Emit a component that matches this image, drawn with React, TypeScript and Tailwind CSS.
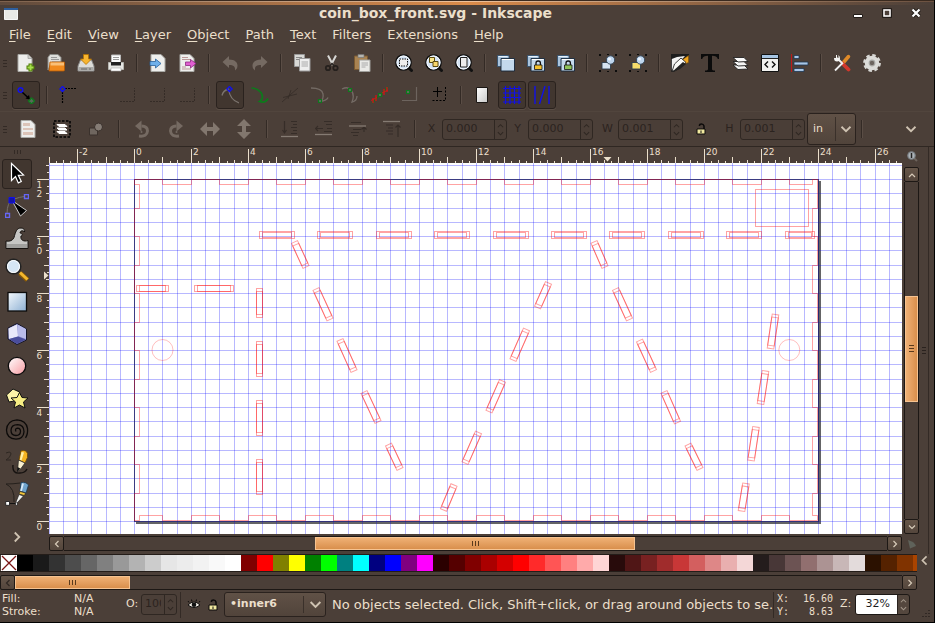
import React, { useEffect, useState } from "react";

type Kids = { children?: React.ReactNode };

/* ---------- small building blocks ---------- */

const Ico = ({ children, s = 18 }: Kids & { s?: number }) => (
  <svg width={s} height={s} viewBox={`0 0 ${s} ${s}`} fill="none" aria-hidden="true" className="block shrink-0">
    {children}
  </svg>
);

const Sep = () => <span className="mr-[6px] ml-[5px] h-[18px] w-px shrink-0 bg-[#332a25] shadow-[1px_0_0_#5a4d45]" />;

const Handle = () => (
  <span className="mr-[4px] ml-[3px] flex w-[4px] shrink-0 flex-col gap-[2px]">
    <i className="h-px bg-[#332a25]" />
    <i className="h-px bg-[#332a25]" />
    <i className="h-px bg-[#332a25]" />
  </span>
);

const Tb = ({ label, on, wide, children }: Kids & { label: string; on?: boolean; wide?: boolean }) => (
  <button type="button" aria-label={label} title={label} className={`flex h-[28px] shrink-0 items-center justify-center ${wide ? "w-[34px]" : "w-[30px]"}`}>
    <span
      className={`flex h-[28px] w-[28px] items-center justify-center rounded-[3px] ${on ? "border border-[#2a221e] bg-[#41362f] shadow-[0_1px_0_#5a4d45]" : ""}`}
    >
      {children}
    </span>
  </button>
);

const Chevron = ({ dir, color = "#cfc3b2", size = 8 }: { dir: "up" | "down" | "left" | "right"; color?: string; size?: number }) => {
  const d = { up: "M1 6L4 3L7 6", down: "M1 2.5L4 5.500L7 2.5", left: "M5.500 1L2.500 4L5.500 7", right: "M2.500 1L5.500 4L2.500 7" }[dir];
  return (
    <svg width={size} height={size} viewBox="0 0 8 8" fill="none" aria-hidden="true" className="block shrink-0">
      <path d={d} stroke={color} strokeWidth="1.200" />
    </svg>
  );
};

/* ---------- command bar icons ---------- */

const Page = ({ x = 1, w = 14 }: { x?: number; w?: number }) => (
  <path d={`M${x} .5h${w - 4}l4 4v13h-${w}z`} fill="#eeeeec" stroke="#a9a9a5" />
);

const INew = () => (
  <Ico>
    <Page />
    <path d="M11 .5v4h4" fill="#cfcfcb" stroke="#999" strokeWidth=".7" />
    <path d="M13.500 9.500v8M9.500 13.500h8" stroke="#4e7a06" strokeWidth="4" />
    <path d="M13.500 10.500v6M10.500 13.500h6" stroke="#a6dd4c" strokeWidth="2" />
  </Ico>
);
const IOpen = () => (
  <Ico>
    <path d="M1 16V3.500L3 .5h8l3 3V8H5z" fill="#dededb" stroke="#8c8c88" />
    <path d="M4 3.500h6M4 5.500h8" stroke="#999" />
    <path d="M3 8h14.500v8q0 1-1 1H2z" fill="#f08a1d" stroke="#b95a04" strokeWidth=".8" />
    <path d="M3.500 8.500h13.500v3H3.500z" fill="#f9c078" />
  </Ico>
);
const ISave = () => (
  <Ico>
    <path d="M3.500 6h11l2.500 6v5H1v-5z" fill="#dcdcd8" stroke="#888" />
    <path d="M2 13h14v3.500H2z" fill="#a9a9a6" />
    <path d="M4 15h6M12 15h2" stroke="#666" />
    <path d="M6.500.5h5v4.500h3L9 10.500 3.500 5h3z" fill="#f7b530" stroke="#b57200" strokeWidth=".8" />
  </Ico>
);
const IPrint = () => (
  <Ico>
    <path d="M4.500 1h9v8h-9z" fill="#fbfbfb" stroke="#bbb" />
    <path d="M6 3.500h6M6 5.500h6" stroke="#999" />
    <path d="M1.500 8.500h15v7h-15z" fill="#e6e6e3" stroke="#b5b5b0" />
    <path d="M4 8h10v3.500H4z" fill="#222" />
    <path d="M4 14h10v3H4z" fill="#fff" stroke="#aaa" strokeWidth=".6" />
  </Ico>
);
const IImport = () => (
  <Ico>
    <Page x={2} />
    <path d="M1 7.500h5.500V5l5.500 4.500-5.500 4.500v-2.500H1z" fill="#6fb0ea" stroke="#2a6199" strokeWidth=".8" />
  </Ico>
);
const IExport = () => (
  <Ico>
    <Page x={1} />
    <path d="M3 3.500h6M3 5.500h9M3 13h4M3 15h9" stroke="#b99" />
    <path d="M6.500 8h5V5.500L17 9.500l-5.500 4.500v-2.500h-5z" fill="#e05fd0" stroke="#8c2a80" strokeWidth=".8" />
  </Ico>
);
const IUndo = ({ flip }: { flip?: boolean }) => (
  <Ico>
    <g transform={flip ? "matrix(-1 0 0 1 18 0)" : undefined}>
      <path d="M1.500 8L8 2v3.500c6 0 8.500 3 8.500 6 0 2.500-1 3.800-2.500 5 .5-4-1.500-5.500-6-5.500V14z" fill="#756a62" />
    </g>
  </Ico>
);
const ICopy = () => (
  <Ico>
    <path d="M1.500.5h10v12h-10z" fill="#d8d8d5" stroke="#999" />
    <path d="M3 3.500h6M3 5.500h6" stroke="#888" />
    <path d="M6.500 4.500h10.500v12.500H6.500z" fill="#eee" stroke="#999" />
    <path d="M8.500 8h6.500M8.500 10h6.500M8.500 12h6.500" stroke="#aaa" />
  </Ico>
);
const ICut = () => (
  <Ico>
    <path d="M5 1.500L10 11M13 1.500L8 11" stroke="#d7d7d4" strokeWidth="2" />
    <circle cx="5" cy="14" r="2.200" stroke="#25201d" strokeWidth="1.800" />
    <circle cx="12.500" cy="14" r="2.200" stroke="#25201d" strokeWidth="1.800" />
    <path d="M7 11.500l2-2 2 2" stroke="#25201d" strokeWidth="1.500" />
  </Ico>
);
const IPaste = () => (
  <Ico>
    <path d="M1.500 2h13v13.500h-13z" fill="#a98352" stroke="#7c5a30" />
    <path d="M5 .5h6v3H5z" fill="#b5b5b0" stroke="#777" strokeWidth=".7" />
    <path d="M6.500 6H17v11.500H6.500z" fill="#e9e9e6" stroke="#a0a09c" />
    <path d="M8.500 9h6.500M8.500 11h6.500M8.500 13h4" stroke="#aaa" />
  </Ico>
);
const IZoom = ({ children }: Kids) => (
  <Ico>
    <path d="M13.500 13.500l3 3" stroke="#111" strokeWidth="3" strokeLinecap="round" />
    <circle cx="8.500" cy="8.500" r="7.700" fill="#d3e2f3" stroke="#0d0d0d" strokeWidth="1.300" />
    <circle cx="8.500" cy="8.500" r="6.500" stroke="#f7fbff" />
    {children}
  </Ico>
);
const IDup = ({ children }: Kids) => (
  <Ico>
    <path d="M.5 1.500H12V5H5v7.500H.5z" fill="#a9c4de" stroke="#2c4c6c" strokeWidth=".8" />
    <path d="M1.500 2.500h9" stroke="#e8f2fb" />
    <path d="M4 4.500h13.500V17H4z" fill="#c4d9ec" stroke="#15273a" strokeWidth=".9" />
    <path d="M5 5.500h11.500" stroke="#fff" />
    {children}
  </Ico>
);
const Lock = ({ c }: { c: string }) => (
  <>
    <path d="M9 11V9q0-2 2.200-2t2.200 2v2" stroke="#111" strokeWidth="1.300" />
    <path d="M7.500 11h7.500v4.500H7.500z" fill={c} stroke="#111" strokeWidth=".8" />
  </>
);
const Dots4 = () => <path d="M0 0h2v2H0zM16 0h2v2h-2zM0 16h2v2H0zM16 16h2v2h-2zM8 0h2v1H8zM8 17h2v1H8z" fill="#0c0c0c" />;
const IGroup = ({ yellow }: { yellow?: boolean }) => (
  <Ico>
    <Dots4 />
    <path d="M3 8.500h8.500v6.500H3z" fill={yellow ? "#f5dc6b" : "#d5e3f2"} stroke="#2b3c4c" strokeWidth=".9" />
    <circle cx="11.500" cy="6" r="4.200" fill="#bfd6ee" stroke="#2b3c4c" strokeWidth=".9" />
    <circle cx="10.500" cy="5" r="1.600" fill="#eef6ff" />
  </Ico>
);
const IFill = () => (
  <Ico>
    <path d="M0 0h18v2L4 17.500H0z" fill="#1c1c1c" />
    <path d="M.8 16.500V5L6 3l8-1z" fill="#f2f2f2" />
    <path d="M17.500 1.500v7L13 10l-2-4z" fill="#f0a51f" stroke="#7a4d05" strokeWidth=".6" />
    <path d="M10 4l5 4.500L8 15 1 17.500 3.500 10z" fill="#fafaf8" stroke="#111" strokeWidth=".8" />
    <path d="M1.500 17.500L12 8l3 2-6 5z" fill="#222" />
  </Ico>
);
const IText = () => (
  <Ico>
    <path d="M0 0h18v5h-1.200Q16 1.800 11 1.800V15q0 1.500 3 1.500V18H4v-1.500q3 0 3-1.500V1.800Q2 1.800 1.200 5H0z" fill="#0b0b0b" />
  </Ico>
);
const ILayers = () => (
  <Ico>
    <path d="M2 11l5 4.500 10-.5-4-4z" fill="#f5f5f5" stroke="#222" strokeWidth=".9" />
    <path d="M2 7.500L7 12l10-.5-4-4z" fill="#f5f5f5" stroke="#222" strokeWidth=".9" />
    <path d="M2 3.500L7 8l10-.5-4-4z" fill="#fbfbfb" stroke="#222" strokeWidth=".9" />
  </Ico>
);
const IXml = () => (
  <Ico>
    <path d="M.5.5h17v17H.5z" fill="#f2f2f0" stroke="#111" />
    <path d="M1 1h16v3H1z" fill="#a6c4e2" />
    <path d="M1 4.500h16" stroke="#222" />
    <path d="M7 7.500L4 10.500l3 3M11 7.500l3 3-3 3" stroke="#111" strokeWidth="1.400" />
  </Ico>
);
const IAlign = () => (
  <Ico>
    <path d="M.5 0v18" stroke="#c01818" />
    <path d="M3 1.500h5v3H3zM3 8h14v3H3zM3 14.500h10v3H3z" fill="#a8c6e6" stroke="#1d3650" strokeWidth=".8" />
  </Ico>
);
const IPrefs = () => (
  <Ico>
    <path d="M15.500 2.500L10 9" stroke="#e08a28" strokeWidth="3.500" strokeLinecap="round" />
    <path d="M9.500 9.500l6 6" stroke="#d3382c" strokeWidth="3.800" strokeLinecap="round" />
    <path d="M9.500 9L2 16.500M4 4l6 6" stroke="#eee" strokeWidth="1.800" />
    <path d="M1 4q0 3.500 3 3.500T7 4.500Q7 2 5.500 1v3H4V1H3v3z" fill="#f4f4f2" />
  </Ico>
);
const IGear = () => (
  <Ico>
    <circle cx="9" cy="9" r="7.800" stroke="#d9d9d6" strokeWidth="2.200" strokeDasharray="3.500 2.630" />
    <circle cx="9" cy="9" r="5" stroke="#dcdcd9" strokeWidth="4.500" />
    <circle cx="9" cy="9" r="2.800" fill="#6c655f" stroke="#a8a8a5" strokeWidth="1.200" />
  </Ico>
);

/* ---------- snap bar icons ---------- */

const faint = "#352c27";
const Node = ({ x, y, c = "#1010f0" }: { x: number; y: number; c?: string }) => (
  <path d={`M${x} ${y - 2.5}l2.500 2.500l-2.500 2.500l-2.500 -2.500z`} stroke={c} strokeWidth="1.400" />
);
const Sq = ({ x, y }: { x: number; y: number }) => <rect x={x - 1.5} y={y - 1.5} width="3" height="3" fill="#5a6a5a" stroke="#0d7a1c" />;

const ISnap = () => (
  <Ico>
    <path d="M5 6l6.500 6" stroke="#000" strokeWidth="1.500" />
    <path d="M13 13.500l-4.500-1L12 9z" fill="#000" />
    <circle cx="3.500" cy="4" r="2.300" stroke="#1010f0" strokeWidth="1.500" />
    <path d="M14.500 12l3 3-3 3-3-3z" fill="#5a6a5a" stroke="#0d7a1c" strokeWidth="1.300" />
  </Ico>
);
const ISnapBox = () => (
  <Ico>
    <path d="M3.500 6v12M6 2.500h12" stroke="#000" strokeWidth="1.200" strokeDasharray="2 1" />
    <Node x={3.5} y={3} />
  </Ico>
);
const IFaintBox = () => (
  <Ico>
    <path d="M1 15.500h14.500V2" stroke={faint} strokeDasharray="2 1" />
  </Ico>
);
const ISnapPath = () => (
  <Ico>
    <path d="M1 9.500q1-5 6.500-6.500 1.500 11 10.500 14" stroke="#7b736d" strokeWidth="1.300" />
    <Node x={8.5} y={3} />
  </Ico>
);
const ISnapGreen = () => (
  <Ico>
    <path d="M.5 2Q6 2 10 6.500q3.500 6-1.500 9 6 2 8.500-3" stroke="#0d7a1c" strokeWidth="1.700" />
  </Ico>
);
const IFaintX = () => (
  <Ico>
    <path d="M1 16L17 2M2 11.500L16 8M7 13l3-9" stroke={faint} strokeWidth=".8" />
  </Ico>
);
const ISmooth = () => (
  <Ico>
    <path d="M0 2q11 0 12 6 1 5-3 7.500 7-1 8-4" stroke="#746b65" strokeWidth="1.300" />
    <Sq x={9} y={15} />
  </Ico>
);
const ICusp = () => (
  <Ico>
    <path d="M1 3q6-3 9 1 4 5 1 12 5-1 5-6" stroke="#746b65" strokeWidth="1.300" />
    <Sq x={9} y={4} />
  </Ico>
);
const IMid = () => (
  <Ico>
    <path d="M1 17L17 1" stroke="#15711c" strokeWidth="1.200" />
    <path d="M2 12v5M5 9v6M13 3v6M16 1v5" stroke="#d01616" strokeWidth="1.300" />
    <path d="M0 14.500l6-3M11 7l6-3" stroke="#d01616" />
    <Sq x={9} y={9} />
  </Ico>
);
const ICenter = () => (
  <Ico>
    <path d="M1 14.500h14.500V1" stroke="#6d645e" strokeWidth="1.200" />
    <Sq x={7} y={6} />
  </Ico>
);
const IRot = () => (
  <Ico>
    <path d="M6.500 1v10M2 5.500h9" stroke="#000" />
    <path d="M1.500 14.500h13V0" stroke="#000" strokeDasharray="2 1.500" />
  </Ico>
);
const IPageBorder = () => (
  <Ico>
    <defs>
      <linearGradient id="pg" x1="0" y1="0" x2="1" y2="1">
        <stop stopColor="#fff" />
        <stop offset="1" stopColor="#c9c9c9" />
      </linearGradient>
    </defs>
    <path d="M3.500 1.500h11v15h-11z" fill="url(#pg)" stroke="#1b1714" />
  </Ico>
);
const IGrid = () => (
  <Ico>
    <path d="M2.500 0v18M7 0v18M11.500 0v18M16 0v18M0 2.500h18M0 7h18M0 11.500h18M0 16h18" stroke="#1010e8" strokeWidth="1.200" />
  </Ico>
);
const IGuides = () => (
  <Ico>
    <path d="M2 0v18M16 0v18M6.500 18L12 0" stroke="#1010e8" strokeWidth="1.400" />
  </Ico>
);

/* ---------- tool control icons ---------- */

const ISelAll = () => (
  <Ico>
    <Page x={2} />
    <path d="M4 3h7v3H4zM4 8h10v2H4zM4 12h10v3H4z" fill="#dcc4b8" />
  </Ico>
);
const ISelLayers = () => (
  <Ico>
    <path d="M1 1h16v16H1z" stroke="#000" strokeWidth="1.500" strokeDasharray="2.500 1.500" />
    <path d="M4 4.500h8l2 2H6zM4 8h8l2 2H6zM4 11.500h8l2 2H6z" fill="#fff" stroke="#fff" />
  </Ico>
);
const IDesel = () => (
  <Ico>
    <path d="M2.500 8h8v7h-8z" fill="#6f665f" stroke="#3a312c" />
    <circle cx="11.500" cy="7" r="4" fill="#857c75" stroke="#3a312c" />
  </Ico>
);
const IRotate = ({ flip }: { flip?: boolean }) => (
  <Ico>
    <g transform={flip ? "matrix(-1 0 0 1 18 0)" : undefined}>
      <path d="M6 16q8 1 8.500-5 0-5-6-5" stroke="#756a62" strokeWidth="3" />
      <path d="M2 6L8.500.5v11z" fill="#756a62" />
      <circle cx="8.500" cy="12" r="1" fill="#756a62" />
    </g>
  </Ico>
);
const IFlip = ({ v }: { v?: boolean }) => (
  <svg width="20" height="20" viewBox="0 0 20 20" aria-hidden="true" className="block shrink-0">
    <path transform={v ? "rotate(90 10 10)" : undefined} d="M0 10L7 3v5h6V3l7 7-7 7v-5H7v5z" fill="#82776e" />
  </svg>
);
const IRaise = ({ n }: { n: number }) => (
  <Ico>
    <g stroke="#362d28" strokeWidth="1.200">
      {n === 0 && <path d="M3.500 1v12M1.500 10l2 3 2-3M10 1.500h6M12 4.500h4M10 7.500h6M12 10.500h4M10 13.500h6" />}
      {n === 1 && <path d="M8 8.500H0M3 6L.5 8.500 3 11M9 1.500h8M11 4.500h6M12 8.500h5M9 11.500h8" />}
      {n === 2 && <path d="M2 2.500h10M4 9.500h8M2 12.500h8M4 15.500h5M15 12V7M12.500 9.500L15 7l2.500 2.500" />}
      {n === 3 && <path d="M3 5h7M5 8h5M3 11h7M5 14h5M15 17V5M12.500 7.500L15 5l2.500 2.500" />}
    </g>
    <path d={["M0 16.500h17", "M0 14.500h17", "M0 6h17", "M0 1.500h17"][n]} stroke="#857b73" strokeWidth="1.300" />
  </Ico>
);
const OpenLock = () => (
  <svg width="10" height="12" viewBox="0 0 10 12" fill="none" aria-hidden="true" className="block shrink-0">
    <path d="M3.500 3V2.500Q3.500 1 5.500 1T8 3v4" stroke="#0d0b0a" strokeWidth="1.500" />
    <path d="M1 6h8v5H1z" fill="#f2e9a0" stroke="#0d0b0a" />
    <path d="M4.500 7.500h1V10h-1z" fill="#111" />
  </svg>
);

/* ---------- toolbox ---------- */

const tools: { name: string; icon: React.ReactNode }[] = [
  {
    name: "Select and transform",
    icon: <path d="M6.500 1.500l12 11.500-5.200.3 3 6.200-3 1.400-2.800-6.400-4 4z" fill="#000" stroke="#fff" strokeWidth="1.200" />,
  },
  {
    name: "Edit paths by nodes",
    icon: (
      <>
        <path d="M2 20Q2 8 8 5.500 14 3 22 2" stroke="#77706a" />
        <path d="M7 6.500l14.500 10-6 5.500z" fill="#000" stroke="#ddd" strokeWidth=".9" />
        <path d="M4 3.500h5.500V9H4z" fill="#1414a8" stroke="#1010f0" />
        <path d="M19.500.5h4v4h-4zM.5 19.500h4v4h-4z" fill="#4b3f38" stroke="#6666f5" strokeWidth="1.400" />
      </>
    ),
  },
  {
    name: "Tweak objects",
    icon: (
      <>
        <path d="M1 22.500V15q6 1 8-3.500C10.500 6 11.500 2 16 2c3 0 4 2 3.500 4-1-1.500-4-2-4.500 1 3 0 2.500 3 1 3-1 4 3 6 7 4.500v8z" fill="#c6c6c4" stroke="#171310" />
        <path d="M2 18h20v4H2z" fill="#a0a09e" />
      </>
    ),
  },
  {
    name: "Zoom",
    icon: (
      <>
        <path d="M15 15l7.500 7" stroke="#8a5a06" strokeWidth="5" />
        <path d="M15 14.500l7.500 7" stroke="#f3b72e" strokeWidth="3" />
        <circle cx="8.500" cy="8.500" r="7.300" fill="#d6e6f5" stroke="#222" strokeWidth="1.500" />
        <circle cx="8.500" cy="8.500" r="6" stroke="#fff" />
      </>
    ),
  },
  { name: "Rectangle", icon: <rect x="3" y="2.500" width="18.500" height="18.500" fill="url(#rectFill)" stroke="#0c0c0c" strokeWidth="1.300" /> },
  {
    name: "3D box",
    icon: (
      <>
        <path d="M3 6l9-4.500L21.500 7v11L12 22.500 3 17z" fill="#8f92d0" stroke="#121225" />
        <path d="M3.500 6.500L12 2.500l1 12L4 17z" fill="#e8e8fa" />
        <path d="M12.500 2.500L21 7v10l-8-3z" fill="#b9bbea" />
        <path d="M4 17l9-2.500 8 3-9 4.500z" fill="#4a4d9c" />
      </>
    ),
  },
  { name: "Ellipse", icon: <circle cx="12" cy="12" r="8.700" fill="url(#ellFill)" stroke="#0c0c0c" strokeWidth="1.300" /> },
  {
    name: "Star",
    icon: (
      <>
        <path d="M1.500 9L8 3l6.500 3-.5 8-10 2z" fill="#fbf3a8" stroke="#111" />
        <path d="M14.500 6.500l2.500 5 6 .5-4.500 4 1.500 6-5.500-3-5.500 3 1.500-6-4.500-4 6-.5z" fill="#f8ee84" stroke="#111" />
      </>
    ),
  },
  {
    name: "Spiral",
    icon: (
      <path
        d="M11 13.500q-1.500-3 1.500-3.300 3 0 3 3.300-.3 4-4.500 4-5 0-5-5.200Q6.300 6.700 12.500 6.700q6.500.3 6.500 7-.5 7-8 7.500Q1.500 20.500 1.500 12 2 2.500 12 1.800q9 .5 10.500 8.500.6 6-2 9.500"
        stroke="#0c0a09"
        strokeWidth="1.300"
      />
    ),
  },
  {
    name: "Pencil",
    icon: (
      <>
        <path d="M1 3q5-2 5 1-1 4-5 6h5" stroke="#2e2722" />
        <path d="M8 15q-1 9 7 8 5 0 7-4" stroke="#161210" strokeWidth="1.400" />
        <path d="M16 .8q5-1.500 6.500 2.700v4L20 13l-6-3z" fill="#f4b321" stroke="#6b4706" strokeWidth=".8" />
        <path d="M16.500 2l2.500.5-2.500 8-1.700-.8z" fill="#fff0a8" />
        <path d="M13.500 10l6.500 3-4 5.500-3.500 3z" fill="#f9efcf" stroke="#222" strokeWidth=".7" />
        <path d="M12.500 17l2.800 1.500L12 22z" fill="#111" />
      </>
    ),
  },
  {
    name: "Bezier curves",
    icon: (
      <>
        <path d="M1 2q9 4 8 18M1 2q7 0 14-1" stroke="#25201c" />
        <path d="M16 .5q5-1 7.500 2.500L21 11l-6-2z" fill="#6fa3cc" stroke="#1d3a52" strokeWidth=".8" />
        <path d="M18 1.500L16 9" stroke="#d8eaf7" strokeWidth="1.800" />
        <path d="M15 9.500l5.500 1.500-1 2.500-5.500-1.500z" fill="#f3c63c" stroke="#222" strokeWidth=".6" />
        <path d="M14 12.500l4.500 1.500-7 7.500-.8-.8z" fill="#f3f3f0" stroke="#222" strokeWidth=".7" />
        <path d="M3 21.500h9" stroke="#111" />
        <path d="M.7 19.500h3.800v3.800H.7z" fill="#fff" stroke="#111" strokeWidth=".8" />
        <circle cx="11.500" cy="22" r="1.200" fill="#fff" stroke="#111" strokeWidth=".7" />
      </>
    ),
  },
];

/* ---------- drawing ---------- */

const IN = 28.49;
const OX = 134.5;
const OY = 521.5;
const px = (inch: number) => Math.floor(OX + inch * IN) + 0.5;
const py = (inch: number) => Math.floor(OY - inch * IN) + 0.5;
const range = (a: number, b: number) => Array.from({ length: b - a + 1 }, (_, i) => a + i);

const boxOutline = () => {
  const p: string[] = [`M${px(0)} ${py(12)}`];
  for (let i = 1; i <= 23; i += 2) {
    const end = i === 23 ? 812.5 : px(i + 1);
    p.push(`H${px(i)}V184.5H${end}V${py(12)}`);
  }
  p.push(`H${px(24) - 1}`);
  for (let i = 11; i >= 1; i -= 2) {
    p.push(`V${py(i)}H812.5V${i === 1 ? 515.5 : py(i - 1)}H${px(24) - 1}`);
  }
  p.push(`V${py(0) - 1}`);
  for (let i = 23; i >= 1; i -= 2) {
    p.push(`H${px(i)}V515.5H${i === 1 ? 139.5 : px(i - 1)}V${py(0) - 1}`);
  }
  p.push(`H${px(0)}`);
  for (let i = 1; i <= 11; i += 2) {
    p.push(`V${py(i)}H139.5V${i === 11 ? 184.5 : py(i + 1)}H${px(0)}`);
  }
  return p.join("") + "Z";
};

const slots: [number, number, number, number][] = [
  [294.5, 242, 306, 267], [316, 289, 330, 319.5], [340, 340, 354, 371], [364, 392, 378, 422], [388.5, 444.5, 400, 469],
  [454, 485, 443.5, 510], [478.5, 432.5, 465, 463], [502.5, 381, 489, 411.5], [526.5, 329.5, 513, 360], [548.5, 283, 537.500, 307.5],
  [594, 242, 605, 267], [615.5, 289, 629.5, 319.5], [639.5, 340.5, 653.5, 371], [664, 392, 677.5, 422.5], [688, 444.5, 700, 469],
  [775.5, 314.5, 770.5, 348.5], [765.5, 371, 760.5, 404], [756, 427, 751, 460.5], [746, 483.5, 741.5, 511],
];

const Slot = ({ a }: { a: [number, number, number, number] }) => {
  const [x1, y1, x2, y2] = a;
  const len = Math.hypot(x2 - x1, y2 - y1);
  const deg = (Math.atan2(y2 - y1, x2 - x1) * 180) / Math.PI;
  return (
    <g transform={`translate(${x1} ${y1}) rotate(${deg})`}>
      <rect x="0" y="-3.300" width={len} height="6.600" />
      <rect x="3" y="-3.300" width={len - 6} height="6.600" />
    </g>
  );
};

const Drawing = () => (
  <svg className="block h-full w-full bg-white" role="img" aria-label="Drawing: coin_box_front">
    <g transform="translate(-49 -163)" fill="none">
      <path d="M818 181H821V524H136V521.500H818Z" fill="#646466" />
      <g stroke="#0000ff" strokeOpacity=".28" shapeRendering="crispEdges">
        {range(-6, 160).map((i) => (
          <path key={"v" + i} d={`M${px(i / 2)} 100V1600`} />
        ))}
        {range(-60, 25).map((i) => (
          <path key={"h" + i} d={`M40 ${py(i / 2)}H2600`} />
        ))}
      </g>
      <rect x="134.500" y="179.500" width="684" height="342" stroke="#24246c" strokeOpacity=".85" />
      <g stroke="#ff0000" strokeOpacity=".36">
        <path d={boxOutline()} />
        <rect x="755.500" y="189.500" width="53" height="37" />
        <circle cx="162.500" cy="350" r="10.500" strokeOpacity=".25" />
        <circle cx="789.300" cy="350" r="10.500" strokeOpacity=".25" />
        {range(0, 9).map((i) => {
          const x = Math.round(259 + i * 58.4) + 0.5;
          const w = i === 9 ? 29 : 35;
          return (
            <g key={i}>
              <rect x={x} y="231.500" width={w} height="7" />
              <rect x={x + 3} y="232.500" width={w - 6} height="5" />
            </g>
          );
        })}
        {[[136.5, 32], [194.5, 39]].map(([x, w]) => (
          <g key={x}>
            <rect x={x} y="285.500" width={w} height="6" />
            <rect x={x + 3} y="285.500" width={w - 6} height="6" />
          </g>
        ))}
        {[[288.5, 29], [341.5, 35], [400.5, 35], [459.5, 35]].map(([y, h]) => (
          <g key={y}>
            <rect x="256.500" y={y} width="6" height={h} />
            <rect x="256.500" y={y + 3} width="6" height={h - 6} />
          </g>
        ))}
        {slots.map((s, i) => (
          <Slot key={i} a={s} />
        ))}
      </g>
    </g>
  </svg>
);

const useWindowWidth = () => {
  const [w, setW] = useState(window.innerWidth);
  useEffect(() => {
    const f = () => setW(window.innerWidth);
    window.addEventListener("resize", f);
    return () => window.removeEventListener("resize", f);
  }, []);
  return w;
};

const tickLen = (q: number) => (q % 8 === 0 ? 14 : q % 4 === 0 ? 6 : q % 2 === 0 ? 3 : 2);

const HRuler = () => {
  const last = Math.max(0, Math.floor((useWindowWidth() - 50 - OX) / (IN * 2)));
  return (
    <svg className="block h-[16px] w-full" role="img" aria-label="Horizontal ruler">
      <g transform="translate(-49 -147)">
        {range(-12, last * 8 + 12).map((q) => (
          <path key={q} d={`M${px(q / 4)} 163v${-tickLen(q)}`} stroke="#ebdfcb" shapeRendering="crispEdges" />
        ))}
        {range(-1, last).map((i) => (
          <text key={i} x={px(i * 2) + 1.5} y="155" fill="#ebdfcb" className="font-['DejaVu_Sans',sans-serif] text-[9px]">
            {i * 2}
          </text>
        ))}
        <path d="M603.500 157h8l-4 4.500z" fill="#ebdfcb" />
      </g>
    </svg>
  );
};

const VRuler = () => (
  <svg className="block h-full w-[13px]" role="img" aria-label="Vertical ruler">
    <g transform="translate(-36 -163)">
      {range(-120, 50).map((q) => (
        <path key={q} d={`M49 ${py(q / 4)}h${q % 8 === 0 ? -12 : q % 4 === 0 ? -5 : q % 2 === 0 ? -3 : -2}`} stroke="#ebdfcb" shapeRendering="crispEdges" />
      ))}
      {range(0, 6).map((i) =>
        String(i * 2)
          .split("")
          .map((c, k) => (
            <text key={i + "-" + k} x="36.500" y={py(i * 2) + 8 + k * 9} fill="#ebdfcb" className="font-['DejaVu_Sans',sans-serif] text-[9px]">
              {c}
            </text>
          )),
      )}
      <path d="M44 271.500v8l4.500-4z" fill="#ebdfcb" />
    </g>
  </svg>
);

/* ---------- scrollbars ---------- */

const ScrollBtn = ({ dir, dim }: { dir: "up" | "down" | "left" | "right"; dim?: boolean }) => (
  <button
    type="button"
    aria-label={"Scroll " + dir}
    className="flex h-[15px] w-[15px] shrink-0 items-center justify-center rounded-[2px] border border-[#1d1815] bg-linear-to-b from-[#665649] to-[#54463c]"
  >
    <Chevron dir={dir} color={dim ? "#2f2722" : "#d8ccba"} />
  </button>
);

/* ---------- form pieces ---------- */

const Spinner = ({ light }: { light?: boolean }) => (
  <span className={`flex w-[12px] flex-col items-center justify-center gap-px border-l ${light ? "border-[#2a221e]" : "border-[#2f2722]"}`}>
    <Chevron dir="up" size={7} color={light ? "#a3978a" : "#2f2722"} />
    <Chevron dir="down" size={7} color={light ? "#a3978a" : "#2f2722"} />
  </span>
);

const NumField = ({ id, label, value }: { id: string; label: string; value: string }) => (
  <span className="flex shrink-0 items-center">
    <label htmlFor={id} className="w-[21px] text-center text-[11px] text-[#2b231f]">
      {label}
    </label>
    <span className="flex h-[21px] w-[65px] rounded-[3px] border border-[#2f2722] bg-[#4a3e37]">
      <input id={id} disabled defaultValue={value} className="w-[51px] bg-transparent pl-[3px] text-[11px] text-[#2b231f]" />
      <Spinner />
    </span>
  </span>
);

/* ---------- palette ---------- */

const palette =
  "000000 1a1a1a 333333 4d4d4d 666666 808080 999999 b3b3b3 cccccc e6e6e6 ececec f2f2f2 f9f9f9 ffffff 800000 ff0000 808000 ffff00 008000 00ff00 008080 00ffff 000080 0000ff 800080 ff00ff 2b0000 550000 800000 aa0000 d40000 ff0000 ff2a2a ff5555 ff8080 ffaaaa ffd5d5 280b0b 501616 782121 a02c2c c83737 d35f5f de8787 e9afaf f4d7d7 241c1c 483737 6c5353 916f6f ac9393 c8b7b7 e3dbdb 2b1100 552200 803300 aa4400".split(
    " ",
  );

const menus: [string, string, string][] = [
  ["", "F", "ile"], ["", "E", "dit"], ["", "V", "iew"], ["", "L", "ayer"], ["", "O", "bject"], ["", "P", "ath"],
  ["", "T", "ext"], ["Filter", "s", ""], ["Exte", "n", "sions"], ["", "H", "elp"],
];

export default function App() {
  return (
    <div className="flex h-screen w-full flex-col overflow-hidden border-r border-b border-black bg-[#4b3f38] font-['DejaVu_Sans','Liberation_Sans',sans-serif] text-[#ebdfcb]">
      {/* window frame and title */}
      <div className="h-px shrink-0 bg-[#3a2a1f]" />
      <div className="h-px shrink-0 bg-linear-to-r from-[#7d614d] via-[#f0c29b] to-[#6b5140]" />
      <div className="h-[3px] shrink-0 bg-linear-to-r from-[#5f4a3c] via-[#dc8c4a] to-[#4b3f38]" />
      <header className="flex h-[17px] shrink-0 items-center">
        <svg width="14" height="12" viewBox="0 0 14 12" aria-hidden="true" className="ml-1">
          <path d="M.5.5h13v11H.5z" fill="#e9e9e6" stroke="#f7f7f7" />
          <path d="M0 0h14v2H0z" fill="#2e5f9e" />
        </svg>
        <h1 className="flex-1 text-center text-[14px] leading-[17px] font-bold">coin_box_front.svg - Inkscape</h1>
        <div className="mr-[13px] flex gap-[19px] pb-px">
          <button type="button" aria-label="Minimize">
            <svg width="10" height="10" aria-hidden="true">
              <path d="M.5 6.500h9v3h-9z" fill="#fff" stroke="#221c18" />
            </svg>
          </button>
          <button type="button" aria-label="Maximize">
            <svg width="10" height="10" fill="none" aria-hidden="true">
              <path d="M.5.5h9v9h-9z" stroke="#221c18" />
              <path d="M2 2h6v6H2z" stroke="#fff" strokeWidth="1.500" />
            </svg>
          </button>
          <button type="button" aria-label="Close">
            <svg width="10" height="10" aria-hidden="true">
              <path d="M1.500 1.500l7 7M8.500 1.500l-7 7" stroke="#221c18" strokeWidth="4" />
              <path d="M1.500 1.500l7 7M8.500 1.500l-7 7" stroke="#fff" strokeWidth="2.200" />
            </svg>
          </button>
        </div>
      </header>

      {/* menu bar */}
      <nav className="flex h-[25px] shrink-0 items-end pl-px">
        {menus.map(([a, b, c]) => (
          <button key={a + b + c} type="button" className="px-2 text-[13px] leading-6">
            {a}
            <span className="underline decoration-1 underline-offset-2">{b}</span>
            {c}
          </button>
        ))}
      </nav>

      {/* command bar */}
      <div role="toolbar" aria-label="Commands" className="flex h-8 shrink-0 items-center">
        <Handle />
        <Tb label="New"><INew /></Tb>
        <Tb label="Open"><IOpen /></Tb>
        <Tb label="Save"><ISave /></Tb>
        <Tb label="Print"><IPrint /></Tb>
        <Sep />
        <Tb label="Import"><IImport /></Tb>
        <Tb label="Export"><IExport /></Tb>
        <Sep />
        <Tb label="Undo"><IUndo /></Tb>
        <Tb label="Redo"><IUndo flip /></Tb>
        <Sep />
        <Tb label="Copy"><ICopy /></Tb>
        <Tb label="Cut"><ICut /></Tb>
        <Tb label="Paste"><IPaste /></Tb>
        <Sep />
        <Tb label="Zoom selection">
          <IZoom><path d="M4.500 5h8v7h-8z" fill="#eee" stroke="#111" strokeDasharray="1.500 1" /></IZoom>
        </Tb>
        <Tb label="Zoom drawing">
          <IZoom>
            <path d="M4.500 3.500h5v5h-5z" fill="#f7e58a" stroke="#5a4a10" />
            <path d="M8 7.500h5v5H8z" fill="#f7d56a" stroke="#5a4a10" />
          </IZoom>
        </Tb>
        <Tb label="Zoom page">
          <IZoom><path d="M5.500 3.500h6.500v9.500H5.500z" fill="#eee" stroke="#222" /></IZoom>
        </Tb>
        <Sep />
        <Tb label="Duplicate"><IDup /></Tb>
        <Tb label="Clone"><IDup><Lock c="#f5c22e" /></IDup></Tb>
        <Tb label="Unlink clone"><IDup><Lock c="#8fc45a" /></IDup></Tb>
        <Sep />
        <Tb label="Group"><IGroup /></Tb>
        <Tb label="Ungroup"><IGroup yellow /></Tb>
        <Sep />
        <Tb label="Fill and stroke"><IFill /></Tb>
        <Tb label="Text and font"><IText /></Tb>
        <Tb label="Layers"><ILayers /></Tb>
        <Tb label="XML editor"><IXml /></Tb>
        <Tb label="Align and distribute"><IAlign /></Tb>
        <Sep />
        <Tb label="Preferences"><IPrefs /></Tb>
        <Tb label="Document properties"><IGear /></Tb>
      </div>

      {/* snap bar */}
      <div role="toolbar" aria-label="Snapping" className="flex h-8 shrink-0 items-center">
        <Handle />
        <Tb label="Enable snapping" on><ISnap /></Tb>
        <Sep />
        <Tb label="Snap bounding boxes"><ISnapBox /></Tb>
        <Tb label="Snap box edges" />
        <Tb label="Snap box corners"><IFaintBox /></Tb>
        <Tb label="Snap edge midpoints"><IFaintBox /></Tb>
        <Tb label="Snap box centers"><IFaintBox /></Tb>
        <Sep />
        <Tb label="Snap nodes" on><ISnapPath /></Tb>
        <Tb label="Snap to paths"><ISnapGreen /></Tb>
        <Tb label="Snap intersections"><IFaintX /></Tb>
        <Tb label="Snap cusp nodes"><ISmooth /></Tb>
        <Tb label="Snap smooth nodes"><ICusp /></Tb>
        <Tb label="Snap midpoints"><IMid /></Tb>
        <Tb label="Snap centers"><ICenter /></Tb>
        <Tb label="Snap rotation centers"><IRot /></Tb>
        <Sep />
        <Tb label="Snap page border"><IPageBorder /></Tb>
        <Tb label="Snap grids" on><IGrid /></Tb>
        <Tb label="Snap guides" on><IGuides /></Tb>
      </div>

      {/* tool controls */}
      <div role="toolbar" aria-label="Tool controls" className="flex h-[35px] shrink-0 items-center border-t border-[#51453d]">
        <Handle />
        <Tb wide label="Select all"><ISelAll /></Tb>
        <Tb wide label="Select all in all layers"><ISelLayers /></Tb>
        <Tb wide label="Deselect"><IDesel /></Tb>
        <Sep />
        <Tb wide label="Rotate left"><IRotate /></Tb>
        <Tb wide label="Rotate right"><IRotate flip /></Tb>
        <Tb wide label="Flip horizontal"><IFlip /></Tb>
        <Tb wide label="Flip vertical"><IFlip v /></Tb>
        <Sep />
        <Tb wide label="Lower to bottom"><IRaise n={0} /></Tb>
        <Tb wide label="Lower"><IRaise n={1} /></Tb>
        <Tb wide label="Raise"><IRaise n={2} /></Tb>
        <Tb wide label="Raise to top"><IRaise n={3} /></Tb>
        <Sep />
        <div className="flex items-center">
          <NumField id="fx" label="X" value="0.000" />
          <NumField id="fy" label="Y" value="0.000" />
          <span className="w-[4px]" />
          <NumField id="fw" label="W" value="0.001" />
        </div>
        <button type="button" aria-label="Lock ratio" className="ml-[13px]">
          <OpenLock />
        </button>
        <div className="ml-[13px] flex">
          <NumField id="fh" label="H" value="0.001" />
        </div>
        <div className="relative ml-[2px] h-[32px] w-[49px] shrink-0">
          <select aria-label="Units" className="h-full w-full appearance-none rounded-[3px] border border-[#2a221e] bg-linear-to-b from-[#605146] to-[#51443b] pl-[5px] text-[11px]">
            <option>in</option>
          </select>
          <span className="pointer-events-none absolute inset-y-[4px] right-0 flex w-[21px] items-center justify-center border-l border-[#3a302a]">
            <Chevron dir="down" size={12} />
          </span>
        </div>
        <Sep />
        <button type="button" aria-label="More controls" className="mr-[17px] ml-auto">
          <Chevron dir="down" size={12} />
        </button>
      </div>

      {/* editor */}
      <div className="flex min-h-0 flex-1 border-t border-[#2f2722]">
        <div role="toolbar" aria-label="Toolbox" className="flex w-9 shrink-0 flex-col items-start">
          <svg width="0" height="0" className="absolute" aria-hidden="true">
            <linearGradient id="rectFill" x1="0" y1="0" x2="1" y2="1">
              <stop stopColor="#f4f9fd" />
              <stop offset="1" stopColor="#8db0d3" />
            </linearGradient>
            <linearGradient id="ellFill" x1="0" y1="0" x2="1" y2="1">
              <stop stopColor="#fff" />
              <stop offset="1" stopColor="#f79aa0" />
            </linearGradient>
          </svg>
          <span className="mt-[3px] mb-[5px] ml-[14px] flex h-[4px] gap-[2px]">
            <i className="w-px bg-[#332a25]" />
            <i className="w-px bg-[#332a25]" />
            <i className="w-px bg-[#332a25]" />
          </span>
          {tools.map((t, i) => (
            <button
              key={t.name}
              type="button"
              aria-label={t.name}
              title={t.name}
              className={`mb-[2px] ml-[2px] flex h-[30px] w-[30px] shrink-0 items-center justify-center rounded-[3px] ${i === 0 ? "border border-[#2a221e] bg-[#41362f]" : ""}`}
            >
              <Ico s={24}>{t.icon}</Ico>
            </button>
          ))}
          <button type="button" aria-label="More tools" className="mt-[20px] ml-[11px]">
            <Chevron dir="right" size={12} />
          </button>
        </div>

        <div className="grid min-w-0 flex-1 grid-cols-[13px_minmax(0,1fr)] grid-rows-[16px_minmax(0,1fr)_20px]">
          <span />
          <HRuler />
          <VRuler />
          <main className="min-h-0 overflow-hidden">
            <Drawing />
          </main>
          <span />
          <div className="flex items-center pb-[1px]">
            <ScrollBtn dir="left" />
            <div role="scrollbar" aria-label="Horizontal" aria-controls="root" aria-valuenow={50} className="flex h-[15px] min-w-0 flex-1 border-y border-[#1d1815]">
              <span className="ml-[30.500%] flex w-[38.900%] items-center justify-center gap-[2px] border border-[#f6c391] bg-linear-to-b from-[#efb074] to-[#d98f4c]">
                <i className="h-[5px] w-px bg-[#5a3a1c]" />
                <i className="h-[5px] w-px bg-[#5a3a1c]" />
                <i className="h-[5px] w-px bg-[#5a3a1c]" />
              </span>
            </div>
            <ScrollBtn dir="right" />
          </div>
        </div>

        <div className="flex w-[26px] shrink-0 flex-col items-center pr-[9px] pl-[2px]">
          <button type="button" aria-label="Toggle zoom" className="mt-[3px] mb-[5px]">
            <Ico s={12}>
              <path d="M8 8l3 3" stroke="#6d645d" strokeWidth="2" />
              <circle cx="5.500" cy="5.500" r="4.300" fill="#7d8388" />
              <circle cx="5.500" cy="5.500" r="3" fill="#aeb4b8" />
              <path d="M5.500 3v5" stroke="#222" strokeWidth="1.500" />
            </Ico>
          </button>
          <ScrollBtn dir="up" />
          <div role="scrollbar" aria-label="Vertical" aria-controls="root" aria-valuenow={50} className="flex min-h-0 w-[15px] flex-1 flex-col border-x border-[#1d1815]">
            <div className="h-[33.700%]" />
            <span className="flex h-[31.500%] flex-col items-center justify-center gap-[2px] border border-[#f6c391] bg-linear-to-r from-[#efb074] to-[#d98f4c]">
              <i className="h-px w-[5px] bg-[#5a3a1c]" />
              <i className="h-px w-[5px] bg-[#5a3a1c]" />
              <i className="h-px w-[5px] bg-[#5a3a1c]" />
            </span>
          </div>
          <ScrollBtn dir="down" />
          <span className="flex h-[20px] items-center">
            <Ico s={10}>
              <path d="M1 1q7 2 8 6l-6 2.500z" fill="#5f625a" />
            </Ico>
          </span>
        </div>
        <div className="mr-[5px] flex w-px shrink-0 items-center justify-center border-r border-[#332a25]">
          <span className="flex flex-col gap-[2px] pr-[8px]">
            <i className="h-px w-[4px] bg-[#2a221e]" />
            <i className="h-px w-[4px] bg-[#2a221e]" />
            <i className="h-px w-[4px] bg-[#2a221e]" />
          </span>
        </div>
      </div>

      {/* palette */}
      <div className="flex h-[18px] shrink-0 items-center">
        <div className="flex h-[18px] min-w-0 flex-1 overflow-hidden border-y border-[#241d19] pl-px">
          <button type="button" aria-label="No color" className="h-4 w-4 shrink-0 bg-white">
            <Ico s={16}>
              <path d="M1 1l14 14M15 1L1 15" stroke="#7a1414" strokeWidth="1.300" />
            </Ico>
          </button>
          {palette.map((c, i) => (
            <button key={i} type="button" aria-label={"#" + c} className="h-4 w-4 shrink-0" style={{ backgroundColor: "#" + c }} />
          ))}
        </div>
        <button type="button" aria-label="Palette menu" className="mr-[4px] ml-[2px] pb-[6px]">
          <Chevron dir="left" size={11} />
        </button>
      </div>
      <div className="mt-[3px] mr-[17px] flex h-[15px] shrink-0">
        <ScrollBtn dir="left" dim />
        <div role="scrollbar" aria-label="Palette" aria-controls="root" aria-valuenow={0} className="flex min-w-0 flex-1 border-y border-[#1d1815]">
          <span className="flex w-[13%] items-center justify-center gap-[2px] border border-[#f6c391] bg-linear-to-b from-[#efb074] to-[#d98f4c]">
            <i className="h-[5px] w-px bg-[#5a3a1c]" />
            <i className="h-[5px] w-px bg-[#5a3a1c]" />
            <i className="h-[5px] w-px bg-[#5a3a1c]" />
          </span>
        </div>
        <ScrollBtn dir="right" />
      </div>

      {/* status bar */}
      <footer className="flex h-[32px] shrink-0 items-center pb-[3px] text-[11px]">
        <dl className="grid shrink-0 grid-cols-[72px_48px] pl-[2px] leading-[13px]">
          <dt>Fill:</dt>
          <dd>N/A</dd>
          <dt>Stroke:</dt>
          <dd>N/A</dd>
        </dl>
        <label htmlFor="opacity" className="ml-[4px] w-[15px]">
          O:
        </label>
        <span className="flex h-[21px] w-[36px] shrink-0 rounded-[3px] border border-[#2f2722]">
          <input id="opacity" disabled defaultValue="100" className="mr-[3px] ml-[3px] w-[16px] bg-transparent text-[11px] text-[#2b231f]" />
          <Spinner />
        </span>
        <span className="mx-[3px] h-[26px] w-px shrink-0 bg-[#332a25]" />
        <button type="button" aria-label="Toggle visibility" className="ml-[3px]">
          <svg width="14" height="12" viewBox="0 0 14 12" fill="none" aria-hidden="true">
            <path d="M1 6q6-6 12 0-6 5-12 0z" fill="#f0ede6" stroke="#0d0b0a" />
            <circle cx="7" cy="5.800" r="2.300" fill="#111" />
            <path d="M2 3.500L1 2M5 2.500L4.500.5M9 2.500l.5-2M12 3.500l1-1.500" stroke="#0d0b0a" />
          </svg>
        </button>
        <button type="button" aria-label="Toggle layer lock" className="ml-[7px]">
          <OpenLock />
        </button>
        <div className="relative ml-[6px] h-[25px] w-[102px] shrink-0">
          <select aria-label="Layer" className="h-full w-full appearance-none rounded-[3px] border border-[#2a221e] bg-linear-to-b from-[#605146] to-[#51443b] pl-[5px] text-[11px] font-bold">
            <option>•inner6</option>
          </select>
          <span className="pointer-events-none absolute inset-y-[4px] right-0 flex w-[23px] items-center justify-center border-l border-[#3a302a]">
            <Chevron dir="down" size={13} />
          </span>
        </div>
        <p className="ml-[6px] min-w-0 flex-1 overflow-hidden text-[13px] whitespace-nowrap">No objects selected. Click, Shift+click, or drag around objects to se.</p>
        <span className="h-[26px] w-px shrink-0 bg-[#332a25]" />
        <dl className="ml-[3px] grid w-[56px] shrink-0 grid-cols-[16px_1fr] font-['DejaVu_Sans_Mono',monospace] text-[10px] leading-[13px]">
          <dt>X:</dt>
          <dd className="text-right">16.60</dd>
          <dt>Y:</dt>
          <dd className="text-right">8.63</dd>
        </dl>
        <label htmlFor="zoom" className="ml-[7px] w-[15px]">
          Z:
        </label>
        <span className="flex h-[21px] w-[55px] shrink-0 overflow-hidden rounded-[3px] border border-[#1d1815] bg-[#54473e]">
          <input id="zoom" defaultValue="32%" className="w-[41px] bg-white pr-[7px] text-right text-[11px] text-[#1c1c1c]" />
          <Spinner light />
        </span>
        <span className="flex w-[24px] shrink-0 justify-end self-end pr-[4px]">
          <Ico s={10}>
            <path d="M9 1v1M9 4v1M9 7v1M6 4v1M6 7v1M3 7v1" stroke="#2a221e" strokeWidth="1.500" />
          </Ico>
        </span>
      </footer>
    </div>
  );
}
